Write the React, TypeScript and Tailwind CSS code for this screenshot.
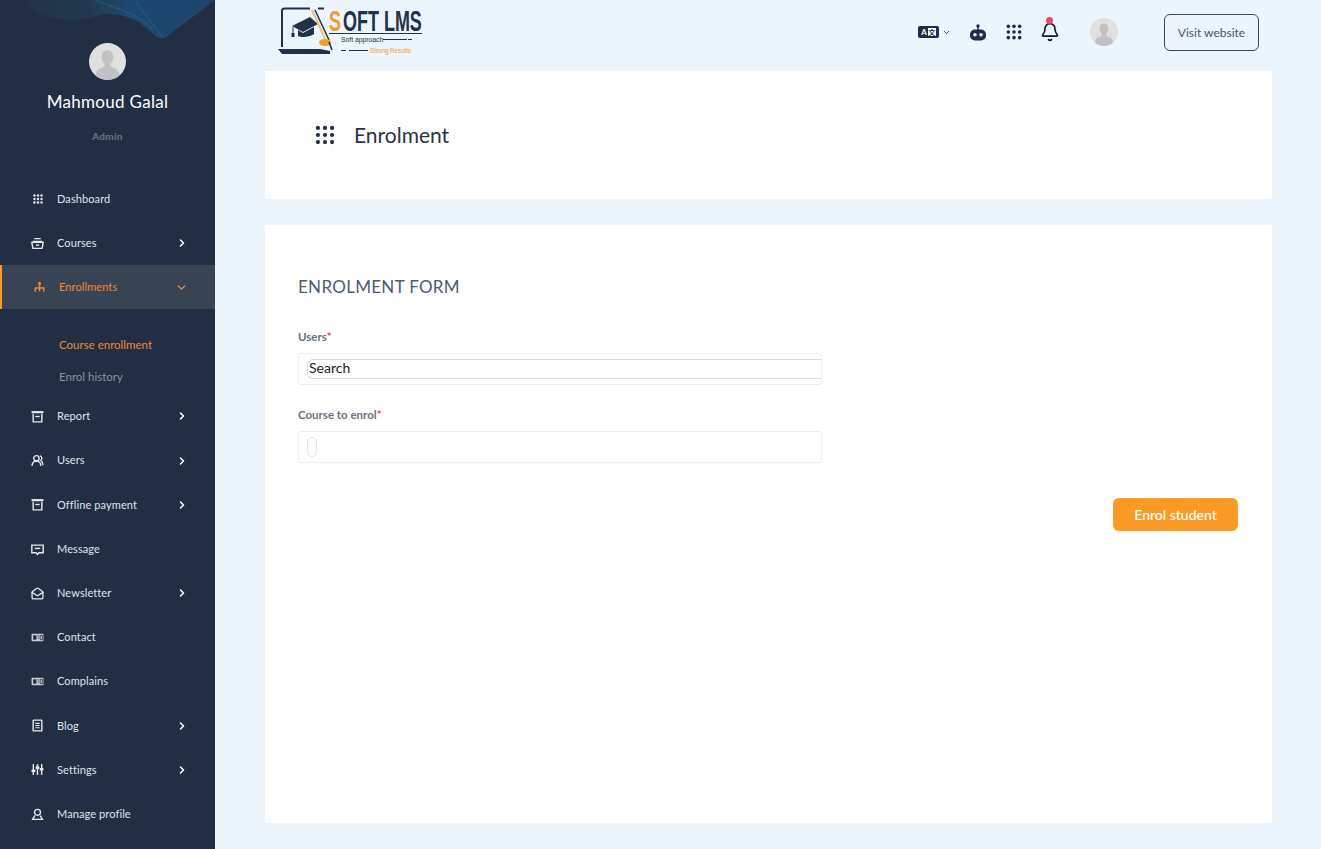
import { Bell, ChevronDown, ChevronRight, MailOpen, UsersRound } from 'lucide-react'
import type { ReactNode } from 'react'

function Dots({ size, r }: { size: number; r: number }) {
  const pos = [12 - 8.5, 12, 12 + 8.5]
  return (
    <svg width={size} height={size} viewBox="0 0 24 24" fill="currentColor">
      {pos.map((y) => pos.map((x) => <circle key={`${x}-${y}`} cx={x} cy={y} r={r} />))}
    </svg>
  )
}

function Avatar({ size }: { size: number }) {
  return (
    <svg width={size} height={size} viewBox="0 0 36 36">
      <defs>
        <clipPath id={`av-${size}`}>
          <circle cx="18" cy="18" r="18" />
        </clipPath>
      </defs>
      <g clipPath={`url(#av-${size})`}>
        <rect width="36" height="36" fill="#e0e0e1" />
        <path d="M18 7c-3.6 0-5.6 2.7-5.6 6.2 0 3 1.200 5.600 2.600 7.300v2.200c-1.800 1.700-7.500 2.300-8 6.300v8h22v-8c-.5-4-6.200-4.600-8-6.300v-2.200c1.400-1.700 2.600-4.300 2.600-7.300C23.600 9.700 21.600 7 18 7z" fill="#c2c2c4" />
      </g>
    </svg>
  )
}

function Ico({ children }: { children: ReactNode }) {
  return (
    <svg width="13" height="13" viewBox="0 0 24 24" fill="none" stroke="currentColor" strokeWidth="2.600">
      {children}
    </svg>
  )
}

const TrayIcon = () => (
  <Ico>
    <path d="M6 3h12M3 8h18" />
    <path d="M1.500 10h21l-2 11h-17z" />
    <path d="M9 15h6" />
  </Ico>
)

const BoxIcon = () => (
  <Ico>
    <path d="M1 4h22" strokeWidth="4" />
    <path d="M4 7v15h16V7" />
    <path d="M8 12h8" />
  </Ico>
)

const MessageIcon = () => (
  <Ico>
    <path d="M1.500 4h21v14h-8l-2.500 3-2.500-3h-8z" />
    <path d="M7 10h10" />
  </Ico>
)

const OrgIcon = () => (
  <Ico>
    <path d="M12 3v16M4 20v-7h16v7" />
    <circle cx="12" cy="4" r="1.500" fill="currentColor" />
  </Ico>
)

const BlogIcon = () => (
  <Ico>
    <rect x="4" y="2" width="16" height="20" rx="1" />
    <path d="M8 8h8M8 12h8M8 16h8" strokeWidth="2" />
  </Ico>
)

const SettingsIcon = () => (
  <svg width="13" height="13" viewBox="0 0 24 24" fill="currentColor">
    <rect x="3" y="2" width="2.600" height="20" />
    <rect x="10.700" y="2" width="2.600" height="20" />
    <rect x="18.400" y="2" width="2.600" height="20" />
    <rect x="1" y="12" width="7" height="5" rx="1.500" />
    <rect x="8.500" y="6" width="7" height="5" rx="1.500" />
    <rect x="16" y="9" width="7" height="5" rx="1.500" />
  </svg>
)

const ProfileIcon = () => (
  <Ico>
    <circle cx="12" cy="8" r="5.500" />
    <path d="M7 14l-4 7h18l-4-7" />
  </Ico>
)

const CardIcon = () => (
  <svg width="13" height="13" viewBox="0 0 24 24">
    <rect x="1" y="5" width="22" height="14" rx="1.500" fill="#c9ccd2" />
    <rect x="4" y="8" width="6" height="8" fill="#222e43" />
    <path d="M12 9h3M12 13h3M17 8h4v8h-4z" stroke="#222e43" strokeWidth="1.500" fill="none" />
  </svg>
)

interface NavItem {
  label: string
  icon: ReactNode
  arrow?: boolean
}

const topItems: NavItem[] = [
  { label: 'Dashboard', icon: <Dots size={10} r={2.900} /> },
  { label: 'Courses', icon: <TrayIcon />, arrow: true },
]

const bottomItems: NavItem[] = [
  { label: 'Report', icon: <BoxIcon />, arrow: true },
  { label: 'Users', icon: <UsersRound size={13} strokeWidth={2.600} />, arrow: true },
  { label: 'Offline payment', icon: <BoxIcon />, arrow: true },
  { label: 'Message', icon: <MessageIcon /> },
  { label: 'Newsletter', icon: <MailOpen size={13} strokeWidth={2.400} />, arrow: true },
  { label: 'Contact', icon: <CardIcon /> },
  { label: 'Complains', icon: <CardIcon /> },
  { label: 'Blog', icon: <BlogIcon />, arrow: true },
  { label: 'Settings', icon: <SettingsIcon />, arrow: true },
  { label: 'Manage profile', icon: <ProfileIcon /> },
]

function NavRow({ item }: { item: NavItem }) {
  return (
    <div className="flex h-[44.2px] items-center pl-[31px] pr-[27px] text-[#dfe6ef]">
      <span className="flex w-[13px] justify-center text-[#e6e9ee]">{item.icon}</span>
      <span className="ml-[13px] flex-1 text-[11px] tracking-[0.1px]">{item.label}</span>
      {item.arrow && <ChevronRight size={12} strokeWidth={3} className="text-white" />}
    </div>
  )
}

function Sidebar() {
  return (
    <aside className="relative h-full w-[215px] shrink-0 overflow-hidden bg-[#222e43]">
      {/* wave decoration */}
      <svg className="absolute left-0 top-0" width="215" height="42" viewBox="0 0 215 42" fill="none">
        <defs>
          <linearGradient id="wave" x1="0" y1="0" x2="1" y2="0">
            <stop offset="0" stopColor="#1f4f5c" stopOpacity=".12" />
            <stop offset=".35" stopColor="#1f4f66" stopOpacity=".35" />
            <stop offset=".55" stopColor="#1c4f7c" stopOpacity=".8" />
            <stop offset="1" stopColor="#1c4a78" stopOpacity=".75" />
          </linearGradient>
        </defs>
        <path d="M20 0c15 14 40 26 75 16 22-5 42 0 60 20 4 3 9 3 13 0 14-12 30-22 47-36z" fill="url(#wave)" />
        <path d="M95 0c20 8 45 14 58 30M135 0c8 14 20 26 28 38" stroke="#2b6ea6" strokeOpacity=".5" />
      </svg>
      <div className="relative flex flex-col items-center pt-[43px]">
        <Avatar size={37} />
        <div className="mt-[11px] text-[17px] leading-[22px] tracking-[0.3px] text-white">Mahmoud Galal</div>
        <div className="mt-[16px] text-[10px] font-bold leading-[14px] tracking-[0.3px] text-[#6c7584]">Admin</div>
      </div>
      <nav className="mt-[34px]">
        {topItems.map((item) => (
          <NavRow key={item.label} item={item} />
        ))}
        <div className="flex h-[44px] items-center border-l-2 border-[#fb9a24] bg-[#384354] pl-[31px] pr-[27px] text-[#ee8a3a]">
          <OrgIcon />
          <span className="ml-[13px] flex-1 text-[11px] tracking-[0.1px]">Enrollments</span>
          <ChevronDown size={13} strokeWidth={2.600} />
        </div>
        <div className="flex h-[85px] flex-col pl-[59px] pt-[20px] text-[11.500px] leading-[32px]">
          <span className="text-[#f08a35]">Course enrollment</span>
          <span className="text-[#8b93a0]">Enrol history</span>
        </div>
        {bottomItems.map((item) => (
          <NavRow key={item.label} item={item} />
        ))}
      </nav>
    </aside>
  )
}

// svg coordinates: x = page x - 278, y = page y
function Logo() {
  const font = "'Liberation Sans', sans-serif"
  return (
    <svg width="150" height="71" viewBox="0 0 150 71" className="ml-[13px] shrink-0">
      <path d="M4 47V11a2.500 2.500 0 0 1 2.500-2.500H32M40 8.500h6" fill="none" stroke="#22304a" strokeWidth="2" />
      <path d="M0 49h42l10 2v3H4z" fill="#22304a" />
      <path d="M14 26l18-9 8 7-15 8z" fill="#22304a" />
      <path d="M20 30v6c4 2 12 1 16-2v-7l-11 6z" fill="#22304a" />
      <path d="M15 27v7" stroke="#22304a" strokeWidth="1" />
      <rect x="13.500" y="33" width="3" height="4" fill="#22304a" />
      <path d="M34 10l14 31" stroke="#f0c080" strokeWidth="2" />
      <path d="M37 10l14 30" stroke="#22304a" strokeWidth="1.500" />
      <ellipse cx="47" cy="42.500" rx="6" ry="3.500" fill="#f39a32" />
      <path d="M51 42l3 8" stroke="#22304a" strokeWidth="1.500" />
      <text transform="translate(51 31) scale(.6 1)" fontFamily={font} fontWeight="700" fontSize="30" fill="#f39a32">S</text>
      <text transform="translate(65 31) scale(.62 1)" fontFamily={font} fontWeight="700" fontSize="29" fill="#22304a">OFT LMS</text>
      <path d="M51 33.500h93" stroke="#22304a" strokeWidth="1.200" />
      <text transform="translate(63 42) scale(.85 1)" fontFamily={font} fontSize="8" fill="#22304a">Soft approach</text>
      <path d="M105 39.500h24M130 39.500h4" stroke="#22304a" strokeWidth="1" />
      <path d="M71 50.500h19M63 50.500h5" stroke="#22304a" strokeWidth="1" />
      <text transform="translate(92 53) scale(.78 1)" fontFamily={font} fontSize="8" fill="#f39a32">Strong Results</text>
    </svg>
  )
}

function Header() {
  return (
    <header className="flex h-[71px] shrink-0 items-center text-[#1d2b45]">
      <Logo />
      <div className="ml-auto flex items-center pb-[7px]">
        <div className="flex items-center">
          <span className="flex h-[12px] w-[21px] items-center justify-center gap-[1px] rounded-[2px] bg-[#1d2b45]">
            <span className="text-[8px] font-bold leading-none text-white">A</span>
            <span className="flex h-[8px] w-[8px] items-center justify-center bg-white font-['Noto_Sans_CJK_SC',sans-serif] text-[7px] font-bold leading-none text-[#1d2b45]">文</span>
          </span>
          <ChevronDown size={9} strokeWidth={2.500} className="ml-[3px]" />
        </div>
        <svg width="18" height="17" viewBox="0 0 17 17" className="ml-[18px]" fill="currentColor">
          <circle cx="8.500" cy="2" r="1.700" />
          <rect x="7.800" y="3" width="1.400" height="3" />
          <rect x="0.500" y="5.500" width="16" height="11" rx="5" />
          <circle cx="5.500" cy="10.800" r="1.800" fill="#ecf4fc" />
          <circle cx="11.500" cy="10.800" r="1.800" fill="#ecf4fc" />
        </svg>
        <span className="ml-[19px] flex">
          <Dots size={16} r={2.700} />
        </span>
        <span className="relative ml-[18px] flex">
          <Bell size={20} strokeWidth={2} className="text-[#0f1a2e]" />
          <span className="absolute left-[6px] top-[-5px] h-[7px] w-[7px] rounded-full bg-[#f5476a]" />
        </span>
        <span className="ml-[30px] flex">
          <Avatar size={28} />
        </span>
        <button className="ml-[46px] mr-[13px] mt-[1px] h-[37px] w-[95px] rounded-[6px] border border-[#3c475c] pt-[1px] text-[12px] text-[#4a5567]">
          Visit website
        </button>
      </div>
    </header>
  )
}

function Field({ label, children, className }: { label: string; children: ReactNode; className?: string }) {
  return (
    <div className={className}>
      <div className="text-[11.500px] font-bold leading-[16px] text-[#6a7280]">
        {label}
        <span className="text-[#e5484d]">*</span>
      </div>
      <div className="mt-[8px] flex h-[32px] w-[524px] items-center rounded-[3px] border border-[#eceef0] bg-white pl-[8px]">
        {children}
      </div>
    </div>
  )
}

export default function App() {
  return (
    <div className="flex h-screen overflow-hidden bg-[#ecf4fc] font-['Lato','Noto_Sans',sans-serif]">
      <Sidebar />
      <main className="flex min-w-0 flex-1 flex-col overflow-hidden pl-[50px] pr-[49px]">
        <Header />
        <section className="flex h-[128px] shrink-0 items-center bg-white pl-[50px] text-[#1d2b45]">
          <Dots size={20} r={2.500} />
          <h1 className="ml-[19px] text-[21px] font-normal text-[#2a3345]">Enrolment</h1>
        </section>
        <section className="mt-[26px] h-[598px] shrink-0 bg-white pl-[33px] pr-[34px] pt-[52px]">
          <h2 className="text-[17px] leading-[20px] tracking-[0.3px] text-[#4c5b73]">ENROLMENT FORM</h2>
          <Field label="Users" className="mt-[32px]">
            <div className="mb-[1px] flex h-[20px] flex-1 items-center rounded-l-[6px] border-y border-l border-[#d9dbde] pb-[2px] pl-[1px] text-[14px] text-[#222]">
              Search
            </div>
          </Field>
          <Field label="Course to enrol" className="mt-[22px]">
            <div className="h-[20px] w-[10px] rounded-[5px] border border-[#e3e4e6]" />
          </Field>
          <div className="mt-[35px] flex justify-end">
            <button className="h-[33px] w-[125px] rounded-[6px] bg-[#fb9a24] pb-[1px] text-[14px] font-medium text-white">Enrol student</button>
          </div>
        </section>
      </main>
    </div>
  )
}
